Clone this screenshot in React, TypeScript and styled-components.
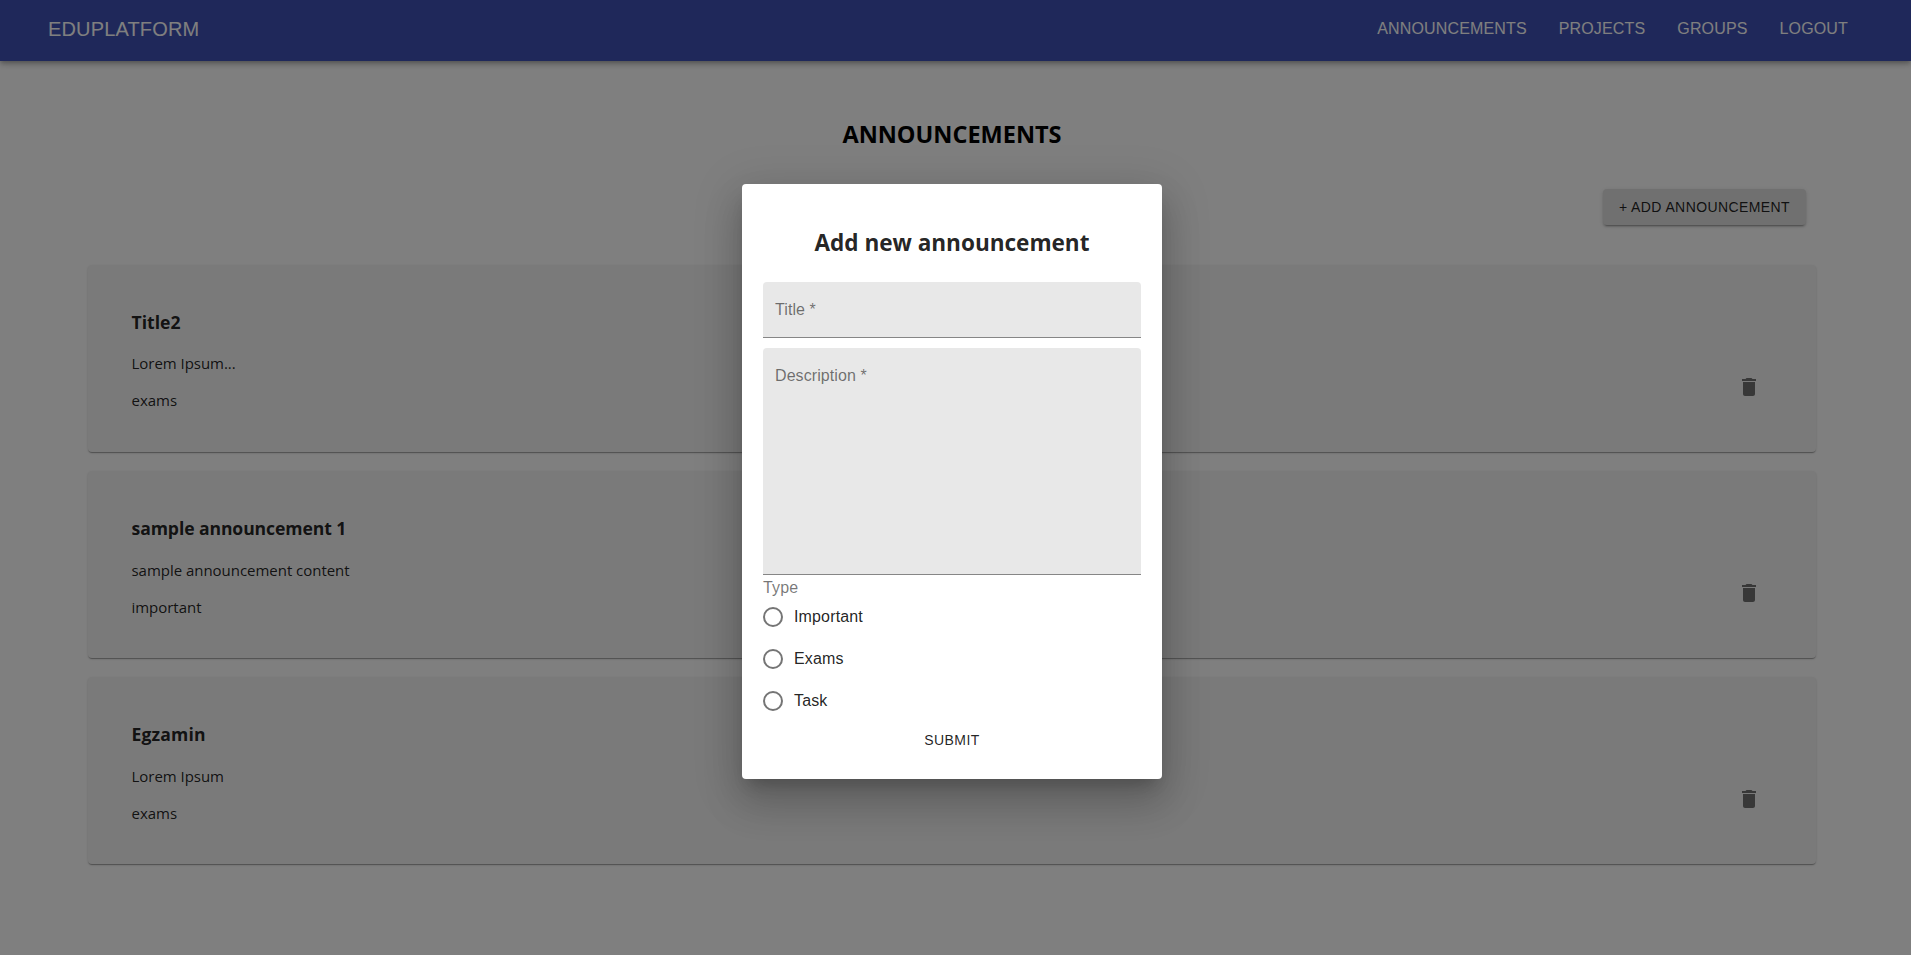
import React from "react";
import styled, { createGlobalStyle } from "styled-components";

const sans = `"Liberation Sans", Arial, sans-serif`;
const humanist = `"Open Sans", "Noto Sans", sans-serif`;

const GlobalStyle = createGlobalStyle`
  * { box-sizing: border-box; }
  html, body { margin: 0; overflow: hidden; background: #fff; }
  h2, h3, p { margin: 0; }
`;

const Page = styled.div`
  position: relative;
  width: 1911px;
  height: 955px;
  overflow: hidden;
  background: #fff;
`;

const Header = styled.header`
  display: flex;
  justify-content: space-between;
  height: 61px;
  padding: 0 63px 0 48px;
  background: #3f51b5;
  color: #fff;
  font-family: ${sans};
  letter-spacing: 0.15px;
  box-shadow: 0 2px 4px -1px rgba(0, 0, 0, 0.2), 0 4px 5px rgba(0, 0, 0, 0.14),
    0 1px 10px rgba(0, 0, 0, 0.12);
`;

const Brand = styled.div`
  font-size: 20px;
  line-height: 58px;
  white-space: nowrap;
`;

const Nav = styled.nav`
  display: flex;
  gap: 32px;
`;

const NavLink = styled.a`
  font-size: 16px;
  line-height: 58px;
  white-space: nowrap;
`;

const Main = styled.main`
  width: 1728px;
  margin-left: 88px;
`;

const PageTitle = styled.h2`
  padding-top: 56px;
  text-align: center;
  font: 700 23.5px/34px ${humanist};
  color: #000;
`;

const Actions = styled.div`
  display: flex;
  justify-content: flex-end;
  padding: 38px 10px 39.5px 0;
`;

const AddButton = styled.button`
  height: 36px;
  width: 203px;
  padding: 0;
  border: 0;
  border-radius: 4px;
  background: #e0e0e0;
  color: rgba(0, 0, 0, 0.87);
  font: 400 14px/24px ${sans};
  letter-spacing: 0.4px;
  white-space: nowrap;
  box-shadow: 0 3px 1px -2px rgba(0, 0, 0, 0.2), 0 2px 2px rgba(0, 0, 0, 0.14),
    0 1px 5px rgba(0, 0, 0, 0.12);
`;

const Cards = styled.div`
  display: flex;
  flex-direction: column;
  gap: 19.3px;
`;

const Card = styled.article`
  display: flex;
  justify-content: space-between;
  height: 187px;
  padding: 0 55px 0 43.5px;
  border-radius: 4px;
  background: #f5f5f5;
  color: rgba(0, 0, 0, 0.87);
  font-family: ${humanist};
  box-shadow: 0 2px 1px -1px rgba(0, 0, 0, 0.2), 0 1px 1px rgba(0, 0, 0, 0.14),
    0 1px 3px rgba(0, 0, 0, 0.12);
`;

const CardBody = styled.div`
  padding-top: 43px;
`;

const CardTitle = styled.h3<{ $spacing: number }>`
  font-size: 17.6px;
  line-height: 28px;
  letter-spacing: ${(p) => p.$spacing}px;
`;

const CardText = styled.p<{ $top: number }>`
  margin-top: ${(p) => p.$top}px;
  font-size: 15px;
  line-height: 22px;
  letter-spacing: -0.03px;
`;

const DeleteButton = styled.button`
  align-self: flex-start;
  margin-top: 110.2px;
  padding: 0;
  border: 0;
  background: none;
  line-height: 0;
  color: rgba(0, 0, 0, 0.54);
`;

const Backdrop = styled.div`
  position: absolute;
  inset: 0;
  display: flex;
  align-items: flex-start;
  padding: 184px 0 0 742px;
  background: rgba(0, 0, 0, 0.5);
`;

const Dialog = styled.form`
  width: 420px;
  height: 595px;
  padding: 0 21px;
  border-radius: 4px;
  background: #fff;
  color: rgba(0, 0, 0, 0.87);
  font-family: ${sans};
  box-shadow: 0 11px 15px -7px rgba(0, 0, 0, 0.2),
    0 24px 38px 3px rgba(0, 0, 0, 0.14), 0 9px 46px 8px rgba(0, 0, 0, 0.12);
`;

const DialogTitle = styled.h2`
  padding-top: 42px;
  margin-bottom: 22px;
  text-align: center;
  font: 700 22.6px/34px ${humanist};
  letter-spacing: -0.04px;
  white-space: nowrap;
`;

const Field = styled.label<{ $height: number }>`
  display: block;
  height: ${(p) => p.$height}px;
  margin-bottom: 10px;
  padding: 18px 12px;
  border-bottom: 1px solid #868686;
  border-radius: 4px 4px 0 0;
  background: #e8e8e8;
  color: rgba(0, 0, 0, 0.54);
  font-size: 16px;
  line-height: 19px;
  letter-spacing: 0.08px;
`;

const TypeLabel = styled.div`
  margin-top: -6px;
  color: rgba(0, 0, 0, 0.54);
  font-size: 16px;
  line-height: 18px;
  letter-spacing: 0.15px;
`;

const Option = styled.label`
  display: flex;
  align-items: center;
  gap: 11px;
  height: 42px;
  font-size: 16px;
  line-height: 24px;
  letter-spacing: 0.15px;
`;

const RadioMark = styled.span`
  width: 20px;
  height: 20px;
  border: 2px solid #757575;
  border-radius: 50%;
`;

const Options = styled.div`
  margin-top: -1px;
`;

const Submit = styled.button`
  display: block;
  margin: 0 auto;
  height: 36px;
  padding: 6px 8px;
  border: 0;
  background: none;
  color: rgba(0, 0, 0, 0.87);
  font: 400 14px/24px ${sans};
  letter-spacing: 0.4px;
`;

const TrashIcon = () => (
  <svg width="24" height="24" viewBox="0 0 24 24" fill="currentColor">
    <path d="M6 19c0 1.100.9 2 2 2h8c1.100 0 2-.9 2-2V7H6v12zM19 4h-3.500l-1-1h-5l-1 1H5v2h14V4z" />
  </svg>
);

const announcements = [
  { title: "Title2", text: "Lorem Ipsum...", type: "exams", spacing: 0 },
  {
    title: "sample announcement 1",
    text: "sample announcement content",
    type: "important",
    spacing: -0.1,
  },
  { title: "Egzamin", text: "Lorem Ipsum", type: "exams", spacing: 0.15 },
];

export default function App() {
  return (
    <Page>
      <GlobalStyle />
      <Header>
        <Brand>EDUPLATFORM</Brand>
        <Nav>
          {["ANNOUNCEMENTS", "PROJECTS", "GROUPS", "LOGOUT"].map((item) => (
            <NavLink key={item}>{item}</NavLink>
          ))}
        </Nav>
      </Header>
      <Main>
        <PageTitle>ANNOUNCEMENTS</PageTitle>
        <Actions>
          <AddButton>+ ADD ANNOUNCEMENT</AddButton>
        </Actions>
        <Cards>
          {announcements.map((a) => (
            <Card key={a.title}>
              <CardBody>
                <CardTitle $spacing={a.spacing}>{a.title}</CardTitle>
                <CardText $top={16.75}>{a.text}</CardText>
                <CardText $top={15}>{a.type}</CardText>
              </CardBody>
              <DeleteButton aria-label="Delete">
                <TrashIcon />
              </DeleteButton>
            </Card>
          ))}
        </Cards>
      </Main>
      <Backdrop>
        <Dialog>
          <DialogTitle>Add new announcement</DialogTitle>
          <Field $height={56}>Title *</Field>
          <Field $height={227}>Description *</Field>
          <TypeLabel>Type</TypeLabel>
          <Options>
            {["Important", "Exams", "Task"].map((o) => (
              <Option key={o}>
                <RadioMark />
                {o}
              </Option>
            ))}
          </Options>
          <Submit type="button">SUBMIT</Submit>
        </Dialog>
      </Backdrop>
    </Page>
  );
}
